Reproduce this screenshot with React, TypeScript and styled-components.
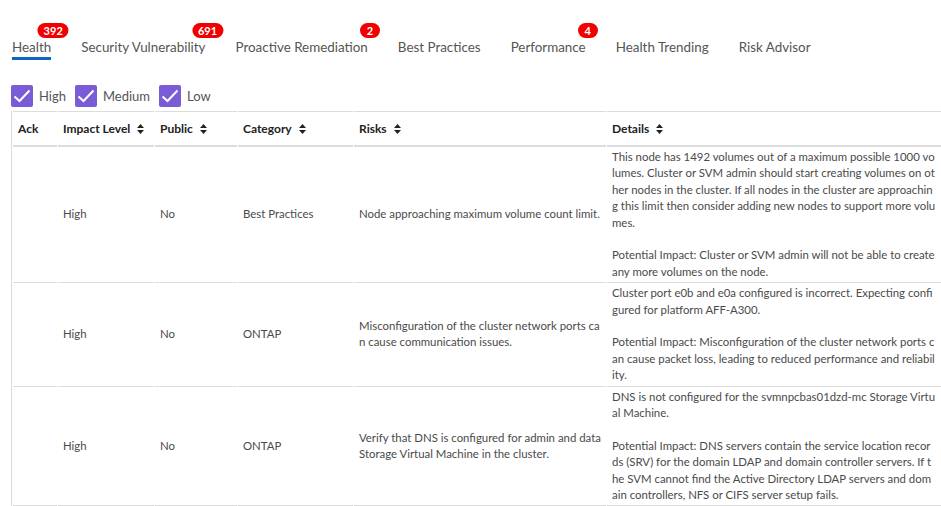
import React from "react";
import styled, { createGlobalStyle } from "styled-components";

const Global = createGlobalStyle`
  html, body { margin: 0; padding: 0; background: #fff; }
  body { font-family: "Source Sans Pro", Lato, "Liberation Sans", sans-serif; color: #4a4a4a; }
  * { box-sizing: border-box; }
`;

const Page = styled.div`
  padding: 22px 0 0 11px;
  width: 941px;
  overflow: hidden;
`;

const Tabs = styled.div`
  display: flex;
  gap: 30px;
  padding-left: 1px;
`;

const Tab = styled.div<{ $active?: boolean }>`
  position: relative;
  padding-top: 16px;
  padding-bottom: 1px;
  font-size: 13.4px;
  line-height: 18px;
  color: #555;
  border-bottom: 3px solid ${(p) => (p.$active ? "#0a66c2" : "transparent")};
`;

const Badge = styled.span`
  position: absolute;
  top: 1px;
  left: calc(100% + 2px);
  transform: translateX(-50%);
  min-width: 20px;
  height: 15px;
  padding: 0 6px;
  border-radius: 8px;
  background: #f00000;
  color: #fff;
  font-size: 11px;
  font-weight: 700;
  line-height: 15px;
  text-align: center;
  white-space: nowrap;
`;

const Filters = styled.div`
  display: flex;
  gap: 9px;
  margin-top: 25px;
  margin-bottom: 4px;
`;

const Filter = styled.label`
  display: flex;
  align-items: center;
  gap: 6px;
  font-size: 13px;
  color: #555;
`;

const Box = styled.span`
  width: 22px;
  height: 22px;
  border-radius: 2px;
  background: #7b5cd7;
  display: flex;
  align-items: center;
  justify-content: center;
`;

const Table = styled.table`
  width: 931px;
  table-layout: fixed;
  border-collapse: separate;
  border-spacing: 1px 0;
  border-left: 1px solid #dcdcdc;
  font-size: 11.4px;
`;

const Th = styled.th`
  text-align: left;
  font-size: 12px;
  font-weight: 700;
  color: #222;
  height: 36px;
  padding: 0 5px;
  border-top: 1px solid #dcdcdc;
  border-bottom: 2px solid #dcdcdc;
  white-space: nowrap;
`;

const HeadInner = styled.span`
  display: inline-flex;
  align-items: center;
  gap: 7px;
`;

const Td = styled.td`
  padding: 2px 5px;
  vertical-align: middle;
  line-height: 16.4px;
  color: #4a4a4a;
  border-bottom: 1px solid #dcdcdc;
  word-break: break-all;
`;

const Para = styled.p`
  margin: 0;
  & + & { margin-top: 16.4px; }
`;

const Sort = () => (
  <svg width="7" height="10" viewBox="0 0 7 10">
    <path d="M3.5 0 L7 4 H0 Z M0 6 H7 L3.5 10 Z" fill="#222" />
  </svg>
);

const Check = () => (
  <svg width="18" height="14" viewBox="0 0 18 14">
    <path d="M1.5 7.5 L6.5 12 L16.5 1.5" stroke="#fff" strokeWidth="2" fill="none" />
  </svg>
);

const tabs: { label: string; badge?: string }[] = [
  { label: "Health", badge: "392" },
  { label: "Security Vulnerability", badge: "691" },
  { label: "Proactive Remediation", badge: "2" },
  { label: "Best Practices" },
  { label: "Performance", badge: "4" },
  { label: "Health Trending" },
  { label: "Risk Advisor" },
];

const rows = [
  {
    category: "Best Practices",
    risk: "Node approaching maximum volume count limit.",
    details: [
      "This node has 1492 volumes out of a maximum possible 1000 volumes. Cluster or SVM admin should start creating volumes on other nodes in the cluster. If all nodes in the cluster are approaching this limit then consider adding new nodes to support more volumes.",
      "Potential Impact: Cluster or SVM admin will not be able to create any more volumes on the node.",
    ],
  },
  {
    category: "ONTAP",
    risk: "Misconfiguration of the cluster network ports can cause communication issues.",
    details: [
      "Cluster port e0b and e0a configured is incorrect. Expecting configured for platform AFF-A300.",
      "Potential Impact: Misconfiguration of the cluster network ports can cause packet loss, leading to reduced performance and reliability.",
    ],
  },
  {
    category: "ONTAP",
    risk: "Verify that DNS is configured for admin and data Storage Virtual Machine in the cluster.",
    details: [
      "DNS is not configured for the svmnpcbas01dzd-mc Storage Virtual Machine.",
      "Potential Impact: DNS servers contain the service location records (SRV) for the domain LDAP and domain controller servers. If the SVM cannot find the Active Directory LDAP servers and domain controllers, NFS or CIFS server setup fails.",
    ],
  },
];

const cols = [
  { label: "Ack", w: 44, sort: false },
  { label: "Impact Level", w: 96, sort: true },
  { label: "Public", w: 82, sort: true },
  { label: "Category", w: 115, sort: true },
  { label: "Risks", w: 252, sort: true },
  { label: "Details", w: 334, sort: true },
];

export default function App() {
  return (
    <>
      <Global />
      <Page>
        <Tabs>
          {tabs.map((t, i) => (
            <Tab key={t.label} $active={i === 0}>
              {t.label}
              {t.badge && <Badge>{t.badge}</Badge>}
            </Tab>
          ))}
        </Tabs>
        <Filters>
          {["High", "Medium", "Low"].map((l) => (
            <Filter key={l}>
              <Box>
                <Check />
              </Box>
              {l}
            </Filter>
          ))}
        </Filters>
        <Table>
          <colgroup>
            {cols.map((c) => (
              <col key={c.label} style={{ width: c.w }} />
            ))}
          </colgroup>
          <thead>
            <tr>
              {cols.map((c) => (
                <Th key={c.label}>
                  <HeadInner>
                    {c.label}
                    {c.sort && <Sort />}
                  </HeadInner>
                </Th>
              ))}
            </tr>
          </thead>
          <tbody>
            {rows.map((r, i) => (
              <tr key={i}>
                <Td />
                <Td>High</Td>
                <Td>No</Td>
                <Td>{r.category}</Td>
                <Td>{r.risk}</Td>
                <Td>
                  {r.details.map((d, j) => (
                    <Para key={j}>{d}</Para>
                  ))}
                </Td>
              </tr>
            ))}
          </tbody>
        </Table>
      </Page>
    </>
  );
}
